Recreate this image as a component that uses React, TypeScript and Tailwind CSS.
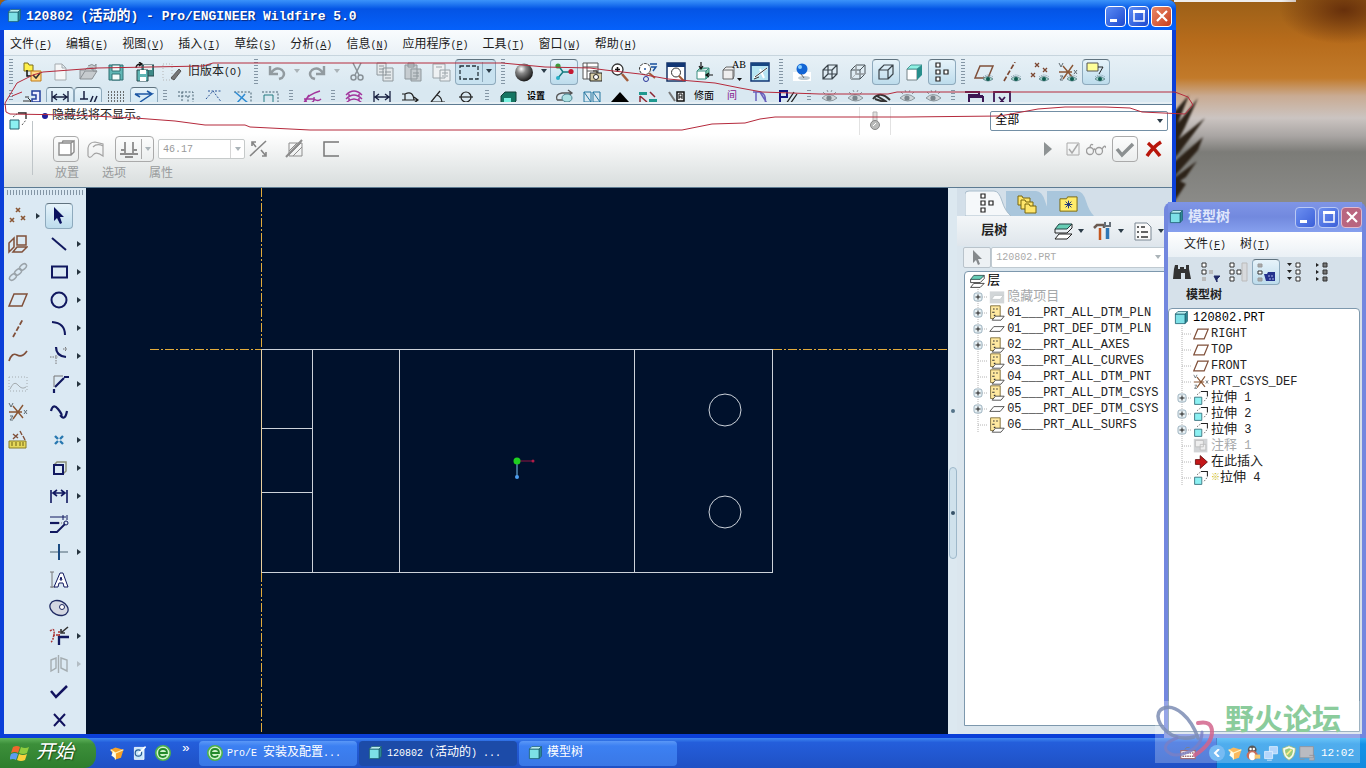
import React, { ReactNode } from "react";

const CJK = "font-['Liberation_Mono','Noto_Sans_CJK_SC',monospace]";

/* Latin runs are set smaller so that two Latin letters span one ideograph. */
function Mixed({ text, small = false }: { text: string; small?: boolean }) {
  const parts = text.split(/([\x20-\x7e]+)/).filter(Boolean);
  return (
    <span className="whitespace-pre">
      {parts.map((p, i) =>
        /^[\x20-\x7e]+$/.test(p) ? (
          <span key={i} className={small ? "text-[10px]" : "text-[12px]"}>{p}</span>
        ) : (
          <span key={i}>{p}</span>
        )
      )}
    </span>
  );
}

const eye = (
  <g>
    <path d="M9 17q4-5 10 0q-5 4-10 0z" fill="#9fd0c8" stroke="#5b7f86" strokeWidth=".8" />
    <circle cx="14" cy="17" r="2" fill="#0f5a50" />
    <path d="M9 15q5-4 10 0" stroke="#6a8896" strokeWidth=".8" strokeDasharray="1 1" />
  </g>
);
const grayEye = (
  <g>
    <path d="M3 11q7-7 15 0q-7 6-15 0z" fill="#cfd6da" stroke="#8c979d" />
    <circle cx="10" cy="11" r="2.6" fill="#7a858b" />
    <path d="M4 5l2 2M8 3l1 2M13 3l-1 2M17 5l-2 2" stroke="#8c979d" />
  </g>
);
const cubeBlue = (
  <g>
    <path d="M15 5l3-3v12l-3 3z" fill="#2f8f98" stroke="#1d5f70" />
    <path d="M3 5h12v12H3z" fill="#7de0e6" stroke="#1d5f70" />
    <path d="M3 5l3-3h12l-3 3z" fill="#c8fafa" stroke="#1d5f70" />
  </g>
);
const extrude = (
  <g>
    <path d="M2 9h9v9H2z" fill="#8cf0f2" stroke="#27616e" />
    <path d="M5 6l5-4M14 14l4-5" stroke="#555" strokeDasharray="2 1.5" />
    <path d="M10 2h8v6" stroke="#222" strokeWidth="1.3" />
  </g>
);
const layerPage = (
  <g>
    <path d="M2 1h12v16H2z" fill="#ffe9a0" stroke="#6d5a22" />
    <path d="M5 5h2M4 9h3M6 13h2M9 5h2" stroke="#333" strokeWidth="1.4" />
    <path d="M4 19l4-5h11l-4 5z" fill="#fff" stroke="#333" />
  </g>
);
const plane = <path d="M1 16L6 4h13l-5 12z" stroke="#80503a" strokeWidth="1.5" />;
const csys = (
  <g stroke="#8a5634" strokeWidth="1.4">
    <path d="M5 4l10 12M15 3L5 17M1 10h13" />
    <path d="M1 1l2 4 2-4M2 14h3l-3 4h3M16 8l3 4M19 8l-3 4" stroke="#5f6a70" strokeWidth="1" />
  </g>
);
const box = <path d="M3 8h9v9H3zM3 8l5-5h9v9l-5 5M12 8l5-5M8 3v9h9M8 12l-5 5" />;
const layers = (
  <g>
    <path d="M2 18l4-5h13l-5 5z" fill="#fff" stroke="#222" />
    <path d="M2 8l4-5h13l-5 5z" fill="#66cdb5" stroke="#244" />
    <path d="M2 8v4h12l5-5V3" stroke="#222" />
  </g>
);

const icons: Record<string, ReactNode> = {
  openCheck: (
    <g>
      <path d="M2 1h4l1 2h4v6H2z" fill="#fff04a" stroke="#7a6c1c" />
      <path d="M5 11v3h4M5 8v5" stroke="#111" strokeWidth="1.5" />
      <path d="M9 9h10v10H9z" fill="#ffd989" stroke="#c27a13" />
      <path d="M11 13l3 3 4-5" stroke="#333" strokeWidth="1.6" />
    </g>
  ),
  page: <path d="M5 2h7l4 4v12H5zM12 2v4h4" fill="#f5f7f8" stroke="#a5abaf" />,
  folder: <path d="M2 17V8h5l2-2h6v3h4l-5 8zM2 17l5-8h12M10 4q4-3 7 0l1-2v5h-5" fill="#c6cbce" stroke="#8a9094" />,
  save: (
    <g>
      <path d="M3 3h14v15H3z" fill="#5fb6b5" stroke="#2e6f73" />
      <path d="M6 3h8v6H6zM6 12h8v6H6z" fill="#f4fbfb" stroke="#2e6f73" />
    </g>
  ),
  saveCopy: (
    <g>
      <path d="M8 3h12v11H8z" fill="#3e8a88" stroke="#29484c" />
      <path d="M10 3h8v5h-8z" fill="#e6eff0" />
      <path d="M3 8h11v11H3z" fill="#5fb6b5" stroke="#29484c" />
      <path d="M6 8h6v4H6zM6 15h6v4H6z" fill="#fff" />
      <path d="M2 6q0-4 5-4M5 0l3 2-3 2" stroke="#111" strokeWidth="1.3" />
    </g>
  ),
  brush: (
    <g>
      <path d="M1 2h9v16H1z" stroke="#b5b5b5" strokeDasharray="1 2" />
      <path d="M9 16L17 7l2 2-7 9z" fill="#777" stroke="#555" />
    </g>
  ),
  undo: <path d="M3 4v8h8M4 11q5-7 11-3q4 4 0 8l-3 1" stroke="#929ba0" strokeWidth="2.4" />,
  redo: <path d="M17 4v8H9M16 11q-5-7-11-3q-4 4 0 8l3 1" stroke="#929ba0" strokeWidth="2.4" />,
  cut: (
    <g stroke="#899298" strokeWidth="1.5">
      <path d="M6 1l6 12M14 1L8 13" /><circle cx="6.500" cy="15.500" r="2.500" /><circle cx="13.500" cy="15.500" r="2.500" />
    </g>
  ),
  copy: <path d="M2 1h9v12H2zM4 4h5M4 7h5M4 10h5M8 6h10v13H8zM10 10h6M10 13h6M10 16h6" fill="#e4e9eb" stroke="#8e979c" />,
  paste: <path d="M2 3h12v14H2zM5 1h6v4H5zM8 7h10v12H8zM10 11h6M10 14h6" fill="#c6ccd0" stroke="#8e979c" />,
  pasteSpecial: <path d="M2 2h12v14H2zM5 5h6M9 8h10v11H9zM11 11h6M11 14h2m2 0h2" fill="#eef1f3" stroke="#9aa3a8" />,
  dashed: <path d="M1 4h18v13H1z" stroke="#25343c" strokeWidth="1.3" strokeDasharray="4 2" />,
  sphere: (
    <g>
      <defs>
        <radialGradient id="ball" cx=".35" cy=".3" r=".75">
          <stop offset="0" stopColor="#fff" /><stop offset=".35" stopColor="#888" /><stop offset="1" stopColor="#111" />
        </radialGradient>
      </defs>
      <circle cx="10" cy="10.500" r="9" fill="url(#ball)" />
    </g>
  ),
  spin: (
    <g>
      <path d="M4 3l5 7-5 6M9 10h8" stroke="#167c80" strokeWidth="1.5" />
      <circle cx="4" cy="4" r="2.600" fill="#3c9b3c" /><circle cx="17" cy="9.500" r="2.600" fill="#c51a32" /><circle cx="4" cy="16" r="2" fill="#29b0c8" />
    </g>
  ),
  camera: (
    <g>
      <path d="M1 1h15v16H1zM1 5h15M5 1v16M5 9h11" fill="#fff" stroke="#555" />
      <path d="M8 11h12v8H8zM11 9h4v2" fill="#d7cda4" stroke="#222" /><circle cx="14" cy="15" r="2.500" fill="#fff" stroke="#222" />
    </g>
  ),
  zoom: (
    <g>
      <path d="M12 12l6 7" stroke="#a15c3a" strokeWidth="2.500" /><circle cx="7.500" cy="7.500" r="5.500" fill="#fff" stroke="#333" strokeWidth="1.300" />
      <path d="M5 7.500h5M7.500 5v5" stroke="#111" strokeWidth="1.600" />
    </g>
  ),
  refit: (
    <g>
      <circle cx="7" cy="7" r="5.500" fill="#fff" stroke="#333" strokeDasharray="3 1" /><path d="M7 6v2M12 2h7M13 5h5l-3 4" stroke="#194f9c" strokeWidth="1.400" />
      <path d="M11 11l6 5" stroke="#a15c3a" strokeWidth="2" /><circle cx="8" cy="17" r="2.500" stroke="#283399" />
    </g>
  ),
  zoomWin: (
    <g>
      <path d="M1 1h18v18H1z" fill="#fff" stroke="#163365" strokeWidth="1.500" /><path d="M1 1h18v4H1z" fill="#123775" />
      <circle cx="10" cy="10.500" r="4.500" stroke="#333" fill="#fff" /><path d="M13 14l5 5" stroke="#a05c36" strokeWidth="2" />
    </g>
  ),
  orient: (
    <g>
      <path d="M3 9h9v8H3z" fill="#fff" stroke="#3b8e80" /><path d="M3 9l3-3h9l-3 3v8l3-3V6" fill="#7cc8ac" stroke="#3b8e80" />
      <path d="M7 0v6M5 4l2 3 2-3M19 13h-6M15 11l-3 2 3 2" stroke="#111" strokeWidth="1.200" />
    </g>
  ),
  saved: (
    <g>
      <path d="M1 8h10v9H1zM1 8l3-3h8v9l-1 3" fill="#eee" stroke="#666" />
      <path d="M15 16h5l-2.500 3z" fill="#111" />
    </g>
  ),
  sketchView: (
    <g>
      <path d="M1 1h18v18H1z" fill="#b7e5f3" stroke="#123775" strokeWidth="1.500" /><path d="M1 1h18v3H1z" fill="#164581" />
      <path d="M4 16L17 6M10 7l4 9" stroke="#fff" strokeWidth="2" /><path d="M5 15L17 6M4 17l5-2" stroke="#333" />
    </g>
  ),
  blueBall: (
    <g>
      <path d="M1 10h18v9H1z" fill="#fff" /><ellipse cx="12" cy="16" rx="6" ry="2" fill="#bbc9d2" />
      <circle cx="10" cy="7" r="5.500" fill="#1265d5" /><circle cx="8" cy="5" r="2" fill="#8ad0ff" /><path d="M9 12l3 4" stroke="#666" />
    </g>
  ),
  wire: <g stroke="#39434a" strokeWidth="1.200">{box}</g>,
  hidden: <g stroke="#4b555b" strokeWidth="1">{box}<path d="M8 3v9h9M8 12l-5 5" stroke="#b0b5b8" /></g>,
  noHidden: <path d="M3 8h9v9H3zM3 8l5-5h9v9l-5 5M12 8l5-5" stroke="#39434a" strokeWidth="1.200" />,
  shaded: (
    <g><path d="M3 7h10v11H3z" fill="#fff" stroke="#748286" /><path d="M3 7l4-4h11l-5 4z" fill="#8df1e2" stroke="#4d9998" /><path d="M13 7l5-4v10l-5 5z" fill="#278e8b" /></g>
  ),
  tree: <path d="M4 1h4v4H4zM4 8h4v4H4zM4 15h4v4H4zM12 8h4v4h-4z" fill="#fff" stroke="#222" strokeWidth="1.200" />,
  plane: <g>{plane}</g>,
  planeEye: <g>{plane}{eye}</g>,
  axisEye: <g><path d="M2 19L13 0" stroke="#7b4630" strokeWidth="1.700" strokeDasharray="5 2" />{eye}</g>,
  pointEye: <g><path d="M5 1l4 4M9 1L5 5M1 11l4 4M5 11l-4 4M13 6l4 4M17 6l-4 4" stroke="#7b4630" strokeWidth="1.300" />{eye}</g>,
  csysEye: <g>{csys}{eye}</g>,
  noteEye: <g><path d="M1 1h11v8H1z" fill="#ffff99" stroke="#555" /><path d="M12 5h5l-4 7" stroke="#222" />{eye}</g>,
  sketchOpen: <g><path d="M10 4h8v11h-8v-3h4V8h-4z" fill="#eef" stroke="#223f9c" strokeWidth="1.500" /><path d="M1 14h8M6 11l3 3-3 3M3 10h4" stroke="#333" /></g>,
  dim: <path d="M2 4v12M18 4v12M3 10h14M7 7l-4 3 4 3M13 7l4 3-4 3" stroke="#182040" strokeWidth="1.300" />,
  constr: <path d="M6 4v8M2 12h8M12 16l3-7M16 16l3-7" stroke="#182040" strokeWidth="1.500" />,
  dots: <path d="M2 5h17M2 8h17M2 11h17M2 14h17M2 17h17" stroke="#444" strokeWidth="1.300" strokeDasharray="1 2" />,
  vertex: <path d="M1 7h17l-12 8M1 7l5 3M13 4l5 3" stroke="#1c57a4" strokeWidth="1.500" />,
  dashA: <path d="M2 5h15v12M2 9h12M6 5v12M12 9v8" stroke="#476170" strokeDasharray="2 1.500" />,
  dashB: <path d="M2 12l7-8 9 12H3M4 4h14" stroke="#2a5498" strokeDasharray="2 1.500" />,
  dashC: <g><path d="M2 5h17v12" stroke="#476170" strokeDasharray="2 1.500" /><path d="M3 5l13 11M5 16l8-9" stroke="#2e8bd2" strokeWidth="1.500" /></g>,
  dashD: <g><path d="M2 5h16v12" stroke="#476170" strokeDasharray="2 1.500" /><path d="M4 8h9v9H4z" stroke="#227b80" /></g>,
  curve: <path d="M2 16q2-8 16-12M2 12h10q4 3 7 0M7 8q-6 8 0 8t5-6" stroke="#a2359c" strokeWidth="1.400" />,
  rings: <path d="M2 8q8-8 16 0M2 12q8-8 16 0M2 16q8-8 16 0M5 7v10M15 7v10" stroke="#a2359c" strokeWidth="1.400" />,
  arcM: <path d="M2 7h3q8-4 9 6M2 13h16M5 7v6M14 10l4 3-4 3" stroke="#222" strokeWidth="1.200" />,
  angle: <path d="M3 15L12 4M3 15h14M9 8q5 2 5 8" stroke="#222" strokeWidth="1.200" />,
  diam: <g stroke="#222" strokeWidth="1.200"><circle cx="10" cy="10" r="5" /><path d="M3 10h14" /></g>,
  solid: <g><path d="M3 9l4-4h11v9l-4 4H3z" fill="#157562" stroke="#133d35" /><path d="M6 11h7v7H6z" fill="#7af0e0" /></g>,
  orbit: <g><path d="M3 13q-2-6 5-7h9M14 3l4 3-4 3M3 13h6" stroke="#555" strokeWidth="1.300" /><ellipse cx="13" cy="11" rx="5" ry="4" fill="#aee1e3" stroke="#4c8490" /></g>,
  nn: <path d="M2 5h7v10H2zM11 5h7v10h-7zM2 5l7 10M11 5l7 10" stroke="#2476a0" />,
  tri: <path d="M1 15L10 5l9 10z" fill="#000" />,
  swap: <g><path d="M1 5h8v3H1zM11 12h8v4h-8z" fill="#1e988f" /><path d="M2 9v7M2 9l7 6M12 5l5 5" stroke="#8e2633" strokeWidth="1.500" /></g>,
  flagA: <g><path d="M3 5l6 9" stroke="#777" strokeWidth="2" /><path d="M11 5h7v9h-7z" fill="#eee" stroke="#111" strokeWidth="1.500" /><path d="M13 12V7h3v5M13 10h3" stroke="#111" /></g>,
  mirrorP: <path d="M3 5h7l8 13M6 5v9M10 5q7 2 5 12" stroke="#6a60bd" strokeWidth="1.500" />,
  pHatch: <g><path d="M2 17V4h7v6H2" stroke="#12127e" strokeWidth="2" /><path d="M8 17l8-12M12 17l7-10M13 16h7" stroke="#222" strokeWidth="1.300" /></g>,
  grayEye,
  darkEye: <path d="M2 12q7-9 17 1M6 9l10 6M4 12l12 4" stroke="#333" strokeWidth="2" />,
  winA: <path d="M1 5h14v3H5v9M5 10h14v7M5 9h14" stroke="#3b1552" strokeWidth="2" />,
  winX: <path d="M2 17V5h16v12M7 10l6 7M13 10l-6 7" stroke="#3b1552" strokeWidth="1.800" />,
  points: <path d="M8 2l4 4M12 2L8 6M2 12l4 4M6 12l-4 4M13 10l4 4M17 10l-4 4" stroke="#8a5634" strokeWidth="1.600" />,
  datumSet: <path d="M9 2h9v9H9zM1 9l5-5v9l-5 5zM5 18l4-5h10l-5 5z" stroke="#80503a" strokeWidth="1.500" />,
  chain: <g stroke="#9ba4aa" strokeWidth="1.500"><ellipse cx="5" cy="15" rx="4" ry="2.500" transform="rotate(-40 5 15)" /><ellipse cx="10" cy="10" rx="4" ry="2.500" transform="rotate(-40 10 10)" /><ellipse cx="15" cy="5" rx="4" ry="2.500" transform="rotate(-40 15 5)" /></g>,
  axis: <path d="M5 19L15 1" stroke="#80503a" strokeWidth="1.800" strokeDasharray="5 2" />,
  spline: <path d="M1 15Q4 6 9 9t10-4" stroke="#80503a" strokeWidth="1.700" />,
  splineG: <g stroke="#a4abaf"><path d="M1 3h18v14H1z" strokeDasharray="1 2" /><path d="M2 15q4-9 8-4t8 2" /></g>,
  csys,
  analysis: <g><path d="M5 4l5 4M10 4L5 9M12 1l2 4M15 6l2 4" stroke="#80503a" strokeWidth="1.400" /><path d="M1 11h17v7H1z" fill="#e5d85a" stroke="#897c22" /><path d="M4 12v4M8 12v4M12 12v4M15 12v4" stroke="#6e6114" /></g>,
  arrow: <path d="M5 1v14l3-3 3 6 2-1-2-6h4z" fill="#09115e" />,
  line: <path d="M3 4l14 12" stroke="#11185f" strokeWidth="2" />,
  rect: <path d="M3 4.500h15v11H3z" stroke="#11185f" strokeWidth="2" />,
  circle: <circle cx="10" cy="10" r="7.500" stroke="#11185f" strokeWidth="2" />,
  arc: <path d="M3 4q13 1 13 13" stroke="#11185f" strokeWidth="2" />,
  fillet: <g><path d="M7 1q0 9 10 10" stroke="#11185f" strokeWidth="2.200" /><path d="M1 11h8M7 9v9M14 3h5M16.500 1v5" stroke="#777" strokeDasharray="1.500 1" /></g>,
  chamfer: <g><path d="M5 19v-4M6 13l9-9M15 3h5" stroke="#11185f" strokeWidth="2.200" /><path d="M5 13V2h9" stroke="#777" /></g>,
  wave: <path d="M2 9q2-8 7-2t3 7q4 5 6-5" stroke="#11185f" strokeWidth="2.200" />,
  pt: <path d="M6 6l3 3M14 6l-3 3M6 14l3-3M14 14l-3-3" stroke="#2878b0" strokeWidth="2.400" />,
  edge: <g><path d="M5 7l3-3h9v9l-3 3" stroke="#8b8f78" strokeWidth="1.500" /><path d="M5 7h9v9H5z" stroke="#11185f" strokeWidth="2" /></g>,
  dimB: <path d="M2 4v13M18 4v13M4 7h12M8 4L4 7l4 3M12 4l4 3-4 3" stroke="#11185f" strokeWidth="1.600" />,
  modify: <g><path d="M1 3h16M14 1v5M18 1v5" stroke="#11185f" /><path d="M1 9h9" stroke="#11185f" strokeWidth="2.200" /><path d="M10 9h6" stroke="#777" strokeDasharray="1 1" /><path d="M1 18h7l8-8" stroke="#11185f" strokeWidth="1.800" /><circle cx="17" cy="9" r="2" stroke="#11185f" /></g>,
  cross: <g><path d="M1 10h18" stroke="#7a8e9d" strokeWidth="1.500" /><path d="M10 2v16" stroke="#1b4b82" strokeWidth="2" /></g>,
  textA: <g><path d="M3 2v16M1 2h4M1 17h5" stroke="#777" /><path d="M5 17L11 3h3l5 14h-4l-1-4h-4l-1 4zM11 10h2l-1-3z" fill="#fff" stroke="#11185f" /></g>,
  palette: <g><ellipse cx="10" cy="10" rx="9.500" ry="7" transform="rotate(25 10 10)" fill="#d4d8e2" stroke="#1f2a62" strokeWidth="1.300" /><circle cx="13" cy="9" r="2.500" fill="#fff" stroke="#1f2a62" /></g>,
  trim: <g><path d="M10 19v-8h10" stroke="#11185f" strokeWidth="2.300" /><path d="M1 5q5-4 4 3t-3 8M4 9h7M10 5v5" stroke="#a33" strokeWidth="1.500" strokeDasharray="2 1" /><path d="M19 1l-6 5M12 3v4h4" stroke="#333" strokeWidth="1.600" /></g>,
  mirror: <path d="M2 6l5-2v10l-5 3zM12 4l6 2v11l-6-3zM9.500 1v18" stroke="#a5adb1" strokeWidth="1.400" />,
  check: <path d="M2 9l5 6L18 4" stroke="#11125e" strokeWidth="2.500" />,
  cancel: <path d="M5 4l11 12M16 4L5 16" stroke="#11125e" strokeWidth="2" />,
  cube: cubeBlue,
  extrude,
  layerPage,
  layers,
  layerFlat: <path d="M1 13l5-6h13l-5 6z" fill="#fff" stroke="#333" />,
  layerGray: <g><path d="M1 3h18v15H1z" fill="#d2d6d8" /><path d="M3 13l4-5h11l-4 5z" fill="#fff" stroke="#c2c6c8" /></g>,
  noteGray: <g><path d="M1 1h17v17H1z" fill="#d2d4d6" /><path d="M3 3h10v8H3zM9 8h7v7H9z" fill="#eee" stroke="#bbb" /></g>,
  insert: <path d="M3 7h6V2l9 8-9 8v-5H3z" fill="#c41719" stroke="#5d0808" />,
  folders: <g fill="#ffe66b" stroke="#79670f"><path d="M1 2h4l1 2h7v7H1z" /><path d="M4 6h4l1 2h7v7H4z" /><path d="M8 10h4l1 2h6v7H8z" /></g>,
  favorite: <g><path d="M1 4h7l1-2h10v15H1z" fill="#ffec6b" stroke="#79670f" /><path d="M10 6v8M6 10h8M7 7l6 6M13 7l-6 6" stroke="#16307d" /></g>,
  tools: <g><path d="M1 7l3-3h7v3" stroke="#6b5b52" strokeWidth="2.500" /><path d="M7 7v12" stroke="#c4571f" strokeWidth="2.500" /><path d="M12 1v4h5V1" stroke="#666f77" strokeWidth="2" /><path d="M14.500 7v11" stroke="#2f77b5" strokeWidth="3.500" /></g>,
  listPage: <g><path d="M2 2h12l4 4v13H2z" fill="#fafafa" stroke="#7a8793" /><path d="M4 6h2M4 11h2M4 16h2M8 6h4M8 11h7M8 16h7" stroke="#333" strokeWidth="1.500" /></g>,
  binoc: <path d="M3 3h3v4h2V5h4v2h2V3h3v4l2 10h-6v-6H9v6H1l1-10z" fill="#333" />,
  treeFilter: <g><path d="M2 1h4v4H2zM2 8h4v4H2z" fill="#fff" stroke="#333" /><path d="M2 15h4v4H2zM9 8h4v4H9z" fill="#bbb" /><path d="M14 14h6l-3 3v3z" fill="#222a66" stroke="#222a66" /></g>,
  treeCols: <g><path d="M2 1h4v4H2zM2 8h4v4H2zM2 15h4v4H2zM9 8h4v4H9z" fill="#fff" stroke="#333" /><path d="M14 1h5v18h-5z" fill="#d8dadd" stroke="#bbb" /></g>,
  treeSel: <g><path d="M2 2h4v3H2zM2 16h4v3H2z" fill="#aaa" stroke="#999" /><path d="M2 9h4v3H2z" fill="#fff" stroke="#333" /><path d="M8 12h3l1-2h7v9H10z" fill="#24328d" /><path d="M12 14h6M13 17h5" stroke="#aab4e8" strokeDasharray="2 1" /></g>,
  expand: <g><path d="M3 1h5L5.500 4zM3 8h5l-2.500 3zM3 15h5l-2.500 3z" fill="#222" /><path d="M12 1h4v4h-4zM12 8h4v4h-4zM12 15h4v4h-4z" fill="#fff" stroke="#333" /></g>,
  collapse: <g><path d="M4 1l3 2-3 2zM4 8l3 2-3 2zM4 15l3 2-3 2z" fill="#222" /><path d="M11 1h4v4h-4zM11 8h4v4h-4zM11 15h4v4h-4z" fill="#777" stroke="#333" /></g>,
  solidG: <path d="M3 4h12v12H3zM15 4l3-2v11l-3 3M6 4l1-2h11" fill="#fff" stroke="#8c8c8c" strokeWidth="1.400" />,
  surfG: <path d="M3 17V9q1-6 7-6l8 2v12q-7-5-10-1t-5 1M8 8q4-4 10-1" stroke="#a3a3a3" strokeWidth="1.200" />,
  depthG: <path d="M1 15h18M6 3v12M14 3v12M2 11h4M14 11h4M6 18h8" stroke="#8c8c8c" strokeWidth="1.800" />,
  flipG: <path d="M1 17L17 2M3 3l4 5M12 11l5 6M3 7V3h4M17 13v4h-4" stroke="#858585" strokeWidth="1.600" />,
  hatchG: <g stroke="#8d8d8d"><path d="M4 4h13v13H4zM4 12l8-8M4 16L16 4M8 17l9-9" /><path d="M1 18L17 1" strokeWidth="2" /></g>,
  thinG: <path d="M18 3H3v14h15" stroke="#777" strokeWidth="1.500" />,
  playG: <path d="M6 3l8 7-8 7z" fill="#8e9394" />,
  previewG: <g stroke="#aaa"><path d="M3 4h12v12H3z" /><path d="M5 10l3 4 6-9" strokeWidth="1.500" /></g>,
  glassesG: <g stroke="#9d9d9d" strokeWidth="1.300"><circle cx="4" cy="12" r="3.500" /><circle cx="13" cy="12" r="3.500" /><path d="M7.500 11q1-2 2 0M4 8q1-4 3-2M16 10q3-5 4-1" /></g>,
  okG: <path d="M2 10l5 6L18 5" stroke="#8b9091" strokeWidth="3.500" />,
  redX: <path d="M4 4q6 5 12 13M17 3Q9 8 3 17" stroke="#b8160b" strokeWidth="3.500" />,
  thermo: <g><path d="M8 1h4v11H8z" fill="#e0e0de" stroke="#b1b1b1" /><circle cx="10" cy="14" r="4.500" fill="#b9bab9" stroke="#878787" /><path d="M8 15l3-3" stroke="#fff" /></g>,
  quick: <g><path d="M2 6l6-3 10 3-3 10-7 2z" fill="#f8a228" /><path d="M2 6l6 4 10-4M8 10v8" stroke="#fff0b4" strokeWidth="1.500" /><path d="M5 8l3 2v7L3 13z" fill="#fffbe6" /></g>,
  desktopIco: <g><path d="M3 3h12v15H3z" fill="#c7e7fb" stroke="#fff" /><circle cx="8" cy="10" r="4" stroke="#2a5c93" strokeWidth="1.500" /><path d="M8 11l9-9" stroke="#fff" strokeWidth="2" /></g>,
  browser: <g><circle cx="10" cy="10" r="9" fill="#d2f4cc" stroke="#4db14a" strokeWidth="2" /><path d="M5 10h10q0-5-5-5t-5 5 5 5q3 0 4-2" stroke="#238929" strokeWidth="2.200" /></g>,
  windows: <g><path d="M3 4q4-2 7 0L8 10q-3-2-7 0z" fill="#f0682c" /><path d="M11 4q4 2 8 0l-2 6q-4 2-8 0z" fill="#8fcd3f" /><path d="M1 11q4-2 7 0l-2 6q-3-2-7 0z" fill="#5c9cf0" /><path d="M9 11q4 2 8 0l-2 6q-4 2-8 0z" fill="#f9d13c" /></g>,
  qq: <g><circle cx="9" cy="6" r="5.500" fill="#222" /><ellipse cx="9" cy="13" rx="7" ry="6" fill="#b53c25" /><ellipse cx="9" cy="14" rx="4" ry="5" fill="#fff" /><circle cx="7" cy="5" r="1.500" fill="#fff" /><circle cx="11" cy="5" r="1.500" fill="#fff" /><path d="M12 12h7v5h-7z" fill="#f0b441" /></g>,
  network: <g fill="#9bc8fa" stroke="#d8ebff"><path d="M8 2h10v9H8z" /><path d="M2 8h10v9H2z" /><path d="M5 19h6" /></g>,
  shield: <g><path d="M10 1l8 3q0 11-8 15Q2 15 2 4z" fill="#f6fae4" stroke="#76a14c" /><path d="M10 4l5 2q0 7-5 10-5-3-5-10z" fill="#7db94c" /><path d="M7 12l6-6" stroke="#ffeb68" strokeWidth="2" /></g>,
  monitor: <path d="M1 2h17v14H1zM1 18h6M13 13h6v6h-6" fill="#a3a4ac" stroke="#6b6d77" />,
  keyboard: <g><path d="M1 7h18v10H1z" fill="#fff" stroke="#7e3b4b" strokeWidth="1.500" /><path d="M3 10h14M3 14h14" stroke="#7c3c49" strokeWidth="2" strokeDasharray="2 1" /><path d="M6 6q1-4 6-3" stroke="#555" /></g>,
};

function Icon({ name, big = true }: { name: string; big?: boolean }) {
  return (
    <svg viewBox="0 0 20 20" fill="none" aria-hidden="true" className={big ? "h-5 w-5 shrink-0" : "h-4 w-4 shrink-0"}>
      {icons[name]}
    </svg>
  );
}

const Caret = ({ faint = false }: { faint?: boolean }) => (
  <svg viewBox="0 0 8 5" className={faint ? "h-[5px] w-2 shrink-0 fill-[#aab3b8]" : "h-[5px] w-2 shrink-0 fill-[#2c3c48]"}><path d="M1 0h6L4 4z" /></svg>
);

function Drop({ faint = false }: { faint?: boolean }) {
  return <button aria-label="更多" className="flex h-7 w-3 items-center justify-center"><Caret faint={faint} /></button>;
}

function Tool({ name, on = false, narrow = false }: { name: string; on?: boolean; narrow?: boolean }) {
  return (
    <button
      aria-label={name}
      className={`relative flex h-[26px] shrink-0 items-center justify-center ${narrow ? "w-[26px]" : "w-7"} ${
        on ? "rounded-sm border border-[#8eaabd] border-t-[#60737f] bg-gradient-to-b from-[#e6f3fa] to-[#bddcec]" : ""
      }`}
    >
      <Icon name={name} />
      {name === "saved" && <span className="absolute right-0 top-0 font-['Liberation_Serif',serif] text-[10px] leading-3">AB</span>}
    </button>
  );
}
const Tools = ({ names, on = [], narrow }: { names: string[]; on?: string[]; narrow?: boolean }) => (
  <>{names.map((n, i) => <Tool key={n + i} name={n} on={on.includes(n)} narrow={narrow} />)}</>
);

/* Tools of the half-hidden second row keep a lower frame height. */
const LowTools = ({ names, on = [], narrow }: { names: string[]; on?: string[]; narrow?: boolean }) => (
  <>
    {names.map((n, i) => (
      <button
        key={n + i}
        aria-label={n}
        className={`flex h-5 shrink-0 items-center justify-center ${narrow ? "w-[26px]" : "w-7"} ${
          on.includes(n) ? "rounded-sm border border-[#8eaabd] border-t-[#60737f] bg-gradient-to-b from-[#e6f3fa] to-[#cfe6f2]" : ""
        }`}
      >
        <Icon name={n} />
      </button>
    ))}
  </>
);
const Grip = () => (
  <span className="flex w-[14px] shrink-0 justify-center self-stretch">
    <span className="my-0.5 w-1 bg-[radial-gradient(circle,#8496a5_0.8px,transparent_1px)] bg-[size:2px_3px]" />
  </span>
);

const menus: [string, string][] = [
  ["文件", "F"], ["编辑", "E"], ["视图", "V"], ["插入", "I"], ["草绘", "S"], ["分析", "A"],
  ["信息", "N"], ["应用程序", "P"], ["工具", "T"], ["窗口", "W"], ["帮助", "H"],
];
const MenuItem = ({ label, k }: { label: string; k: string }) => (
  <button className="whitespace-nowrap text-[12px] leading-4 text-[#1b1b1b]">
    {label}<span className="text-[10px]">(<u>{k}</u>)</span>
  </button>
);

function WinButtons({ pale = false }: { pale?: boolean }) {
  const base = "flex h-[21px] w-[21px] items-center justify-center rounded border ";
  const blue = pale
    ? "border-[#b9c8f4] bg-gradient-to-br from-[#6d8ff0] to-[#3c5fd8]"
    : "border-white bg-gradient-to-br from-[#5d8cf5] to-[#1d47cf]";
  const red = pale ? "border-[#e0b9cd] bg-[#b9657f]" : "border-white bg-gradient-to-br from-[#e98765] to-[#c73d1c]";
  return (
    <div className="flex gap-0.5">
      <button aria-label="最小化" className={base + blue}><svg viewBox="0 0 14 14" className="h-3.5 w-3.5"><path d="M1 10h7v3H1z" fill="#fff" /></svg></button>
      <button aria-label="最大化" className={base + blue}><svg viewBox="0 0 14 14" className="h-3.5 w-3.5"><path d="M2 3h10v9H2z" fill="none" stroke="#fff" strokeWidth="1.500" /><path d="M1 1h12v3H1z" fill="#fff" /></svg></button>
      <button aria-label="关闭" className={base + red}><svg viewBox="0 0 14 14" className="h-3.5 w-3.5"><path d="M2 2l10 10M12 2L2 12" stroke="#fff" strokeWidth="2.200" /></svg></button>
    </div>
  );
}

function Dashboard() {
  return (
    <section className="flex h-[84px] shrink-0 border-y border-[#5d7b92] bg-gradient-to-b from-white from-35% to-[#d8dddd]">
      <div className="flex w-7 justify-center pt-1.5"><Icon name="extrude" /></div>
      <div className="mb-3 mt-4 w-px bg-[#bfc5c8]" />
      <div className="flex min-w-0 flex-1 flex-col">
        <div className="flex h-[31px] items-start pl-[9px]">
          <p className="flex items-center gap-1 pt-[3px] text-[12px] leading-4 text-[#222]">
            <span className="h-1.5 w-1.5 rounded-full bg-[#1f1f9c]" />隐藏线将不显示。
          </p>
          <div className="ml-auto mt-0.5 flex h-7 w-8 items-center justify-center border-x border-[#e2e2e2]"><Icon name="thermo" /></div>
          <label className="relative ml-[99px] mr-1 mt-1.5 flex w-[178px] items-center">
            <select aria-label="过滤器" className="h-5 w-full appearance-none rounded-xs border border-[#738fa5] bg-white pl-1 text-[12px] text-black">
              <option>全部</option>
            </select>
            <span className="pointer-events-none absolute right-1"><Caret /></span>
          </label>
        </div>
        <div className="flex h-[26px] items-center pl-5">
          <button aria-label="实体" className="flex h-[26px] w-[26px] items-center justify-center rounded-sm border border-[#aaa]"><Icon name="solidG" /></button>
          <button aria-label="曲面" className="flex w-8 justify-center"><Icon name="surfG" /></button>
          <div className="ml-1 flex h-[26px] items-center rounded-sm border border-[#aaa]">
            <button aria-label="深度" className="flex w-[26px] justify-center border-r border-[#aaa]"><Icon name="depthG" /></button>
            <button aria-label="深度选项" className="flex w-[11px] justify-center"><Caret faint /></button>
          </div>
          <div className="ml-1 flex h-5 w-[87px] items-center rounded-xs border border-[#c6caca] bg-white">
            <input aria-label="深度值" defaultValue="46.17" className="h-full min-w-0 flex-1 bg-transparent pl-1 text-[10px] text-[#999] outline-none" />
            <button aria-label="最近值" className="flex h-full w-[14px] items-center justify-center border-l border-[#d5d5d5]"><Caret faint /></button>
          </div>
          <div className="flex items-center gap-4 pl-1"><Icon name="flipG" /><Icon name="hatchG" /><Icon name="thinG" /></div>
          <div className="ml-auto flex items-center pr-2">
            <Icon name="playG" /><span className="w-[6px]" /><Icon name="previewG" /><span className="w-0.5" /><Icon name="glassesG" />
            <button aria-label="确定" className="mx-1.5 flex h-[26px] w-[26px] items-center justify-center rounded-sm border border-[#aaa]"><Icon name="okG" /></button>
            <button aria-label="取消"><Icon name="redX" /></button>
          </div>
        </div>
        <div className="flex h-6 items-center gap-[23px] pl-[22px] text-[12px] text-[#989b9c]">
          <button>放置</button><button>选项</button><button>属性</button>
        </div>
      </div>
    </section>
  );
}

const datumTools = ["points", "datumSet", "chain", "plane", "axis", "spline", "splineG", "csys", "analysis"];
const sketchTools: [string, number][] = [
  ["arrow", 0], ["line", 1], ["rect", 1], ["circle", 1], ["arc", 1], ["fillet", 1], ["chamfer", 1], ["wave", 0], ["pt", 1],
  ["edge", 1], ["dimB", 1], ["modify", 0], ["cross", 1], ["textA", 0], ["palette", 0], ["trim", 1], ["mirror", 2], ["check", 0], ["cancel", 0],
];
const SideCaret = ({ show }: { show: number }) => (
  <span className="flex w-3 justify-center">
    {show > 0 && <svg viewBox="0 0 4 6" className={show === 2 ? "h-1.5 w-1 fill-[#b3bdc4]" : "h-1.5 w-1 fill-[#26343f]"}><path d="M0 0v6l4-3z" /></svg>}
  </span>
);

function SideBar() {
  return (
    <aside className="flex w-[82px] shrink-0 flex-col bg-[#dbe9f3]">
      <div className="mx-0.5 mt-0.5 h-[5px] shrink-0 bg-[radial-gradient(circle,#8496a5_0.8px,transparent_1px)] bg-[size:3px_2px]" />
      <div className="flex pt-[7px]">
        <div className="flex w-10 flex-col">
          {datumTools.map((n, i) => (
            <div key={n} className="flex h-7 items-center pl-1"><button aria-label={n}><Icon name={n} /></button><span className="w-1" /><SideCaret show={i === 0 ? 1 : 0} /></div>
          ))}
        </div>
        <div className="flex flex-col">
          {sketchTools.map(([n, c]) => (
            <div key={n} className="flex h-7 items-center pl-px"><Tool name={n} on={n === "arrow"} /><SideCaret show={c} /></div>
          ))}
        </div>
      </div>
    </aside>
  );
}

function Canvas() {
  return (
    <main className="relative min-w-0 flex-1 overflow-hidden bg-[#00112c]">
      <svg className="absolute inset-0 h-full w-full" fill="none" stroke="#ccd2da" shapeRendering="crispEdges">
        <path d="M175.500 161.500h511v223h-511zM226.500 161.500v223M313.500 161.500v223M548.500 161.500v223M175.500 240.500h51M175.500 304.500h51" />
        <path d="M175.500 0v161M175.500 385v600M64 161.500h111M687 161.500h1200" stroke="#e3ac3c" strokeDasharray="9 2 2 2" />
        <path d="M175.500 161v224" stroke="#e8cf9e" />
        <g shapeRendering="auto">
          <circle cx="639" cy="222" r="16" /><circle cx="639" cy="324" r="16" />
          <path d="M431 273h15" stroke="#8c1740" /><circle cx="447" cy="273" r="1.500" fill="#b01c48" stroke="none" />
          <path d="M431 273v15" stroke="#7ec8f4" /><circle cx="431" cy="289" r="2" fill="#4c9df0" stroke="none" />
          <circle cx="431" cy="273" r="3.500" fill="#1fd01f" stroke="none" />
        </g>
      </svg>
    </main>
  );
}

const Expander = ({ show }: { show: boolean }) => (
  <svg viewBox="0 0 18 16" className="h-4 w-[18px] shrink-0" fill="none">
    {show ? (
      <g><path d="M9 0v16M13 8h5" stroke="#b4b4b4" strokeDasharray="1 1" /><rect x="5" y="4" width="8" height="8" rx="2" fill="#e8f1f5" stroke="#9db2bf" /><path d="M6.500 8h5M9 5.500v5" stroke="#222" /></g>
    ) : (
      <path d="M9 0v16M9 8h9" stroke="#b4b4b4" strokeDasharray="1 1" />
    )}
  </svg>
);

const layerRows: [string, string, boolean][] = [
  ["隐藏项目", "layerGray", true], ["01___PRT_ALL_DTM_PLN", "layerPage", true], ["01___PRT_DEF_DTM_PLN", "layerFlat", true],
  ["02___PRT_ALL_AXES", "layerPage", true], ["03___PRT_ALL_CURVES", "layerPage", false], ["04___PRT_ALL_DTM_PNT", "layerPage", false],
  ["05___PRT_ALL_DTM_CSYS", "layerPage", true], ["05___PRT_DEF_DTM_CSYS", "layerFlat", true], ["06___PRT_ALL_SURFS", "layerPage", false],
];
const modelRows: [string, string, boolean][] = [
  ["RIGHT", "plane", false], ["TOP", "plane", false], ["FRONT", "plane", false], ["PRT_CSYS_DEF", "csys", false],
  ["拉伸 1", "extrude", true], ["拉伸 2", "extrude", true], ["拉伸 3", "extrude", true], ["注释 1", "noteGray", false],
  ["在此插入", "insert", false], ["拉伸 4", "extrude", false],
];

function TreeRow({ text, icon, open, muted, star }: { text: string; icon: string; open: boolean; muted?: boolean; star?: boolean }) {
  return (
    <li className={`flex h-4 items-center text-[13px] leading-4 ${muted ? "text-[#a5a8aa]" : "text-[#222]"}`}>
      <Expander show={open} /><span className="w-0.5" /><Icon name={icon} big={false} /><span className="w-0.5" />
      {star && <span className="text-[9px] text-[#c9b400]">※</span>}
      <Mixed text={text} />
    </li>
  );
}

function LayerPanel() {
  return (
    <section className="flex w-[215px] shrink-0 flex-col bg-[#dbe6ee]">
      <div className="flex h-7 shrink-0 items-end bg-[#d3dfe9] pl-2">
        <svg viewBox="0 0 130 26" className="h-[26px] w-[130px]">
          <path d="M82 26V1h30q6 0 9 10t8 15z" fill="#a9c6dc" /><path d="M41 26V1h30q6 0 9 10t8 15z" fill="#a9c6dc" />
          <path d="M0 26V4q0-3 4-3h25q5 0 8 10t9 15z" fill="#f5f8fa" stroke="#a8bccb" />
          <svg x="12" y="3" width="20" height="20" viewBox="0 0 20 20" fill="none">{icons.tree}</svg>
          <svg x="52" y="4" width="20" height="20" viewBox="0 0 20 20" fill="none">{icons.folders}</svg>
          <svg x="94" y="5" width="19" height="19" viewBox="0 0 20 20" fill="none">{icons.favorite}</svg>
        </svg>
      </div>
      <div className="flex h-[30px] shrink-0 items-center bg-gradient-to-b from-[#f3f6f8] to-[#dfe6ec] pl-6">
        <h2 className="w-[72px] text-[13px] font-bold text-[#222]">层树</h2>
        <div className="flex items-center gap-2">
          {["layers", "tools", "listPage"].map((n) => <button key={n} aria-label={n} className="flex items-center gap-1"><Icon name={n} /><Caret /></button>)}
        </div>
      </div>
      <div className="flex h-[22px] shrink-0 items-center pl-1.5">
        <button aria-label="选取" className="flex h-[21px] w-7 items-center justify-center rounded-xs border border-[#b9c3cb] bg-[#edf1f4]">
          <svg viewBox="0 0 20 20" className="h-5 w-5"><path d="M6 3v13l3-3 2 5 2-1-2-5h4z" fill="#85898c" /></svg>
        </button>
        <label className="relative flex h-[21px] min-w-0 flex-1 items-center">
          <input aria-label="活动模型" disabled defaultValue="120802.PRT" className="h-[21px] w-full rounded-xs border border-[#c0cad1] bg-white pl-1 text-[10px] text-[#aaa]" />
          <span className="absolute right-[10px]"><Caret faint /></span>
        </label>
      </div>
      <div className="mb-2 ml-[7px] mr-1 mt-[3px] flex-1 rounded-t border border-[#7d98ad] bg-white px-1">
        <div className="flex h-[17px] items-center gap-0.5 text-[13px] leading-4"><Icon name="layers" big={false} />层</div>
        <ul>{layerRows.map(([t, i, o]) => <TreeRow key={t} text={t} icon={i} open={o} muted={i === "layerGray"} />)}</ul>
      </div>
    </section>
  );
}

function MainWindow() {
  return (
    <div className="absolute bottom-[30px] left-0 top-0 flex w-[86.1%] flex-col rounded-t-lg bg-[#0b3fd8] px-1 pb-1">
      <header className="-mx-1 flex h-[30px] shrink-0 items-center rounded-t-lg bg-gradient-to-b from-[#3b93fa] via-[#0454e5] via-30% to-[#0561fb] pl-1.5 pr-1 pt-0.5">
        <Icon name="cube" big={false} />
        <h1 className="ml-1 flex-1 whitespace-pre text-[13px] font-bold leading-5 text-white [text-shadow:1px_1px_1px_#0a2a80]">
          120802 (<span className="text-[14px]">活动的</span>) - Pro/ENGINEER Wildfire 5.0
        </h1>
        <WinButtons />
      </header>
      <nav className="flex h-[26px] shrink-0 items-center gap-[14px] border-b border-[#c7d5de] bg-gradient-to-b from-[#f9fcfe] to-[#eaf1f6] pl-1.5 pt-1.5">
        {menus.map(([l, k]) => <MenuItem key={k} label={l} k={k} />)}
      </nav>
      <div className="flex h-[31px] shrink-0 items-center overflow-hidden bg-gradient-to-b from-[#e6f0f6] to-[#d9e8f1]">
        <Grip />
        <Tools names={["openCheck", "page", "folder", "save", "saveCopy"]} />
        <button className="flex w-[91px] shrink-0 items-center gap-1.5 whitespace-nowrap pl-1 text-[12px] text-[#222]"><Icon name="brush" /><Mixed text="旧版本(O)" small /></button>
        <Grip />
        <Tool name="undo" /><Drop faint /><Tool name="redo" /><Drop faint />
        <Tools names={["cut", "copy", "paste", "pasteSpecial"]} />
        <div className="flex h-[26px] w-[41px] shrink-0 items-center rounded-sm border border-[#8eaabd] border-t-[#60737f] bg-[#c8e2f0]">
          <button aria-label="选取框" className="flex w-7 justify-center border-r border-[#8eaabd]"><Icon name="dashed" /></button><Drop />
        </div>
        <Grip />
        <Tool name="sphere" /><Drop />
        <Tools names={["spin", "camera", "zoom", "refit", "zoomWin", "orient", "saved", "sketchView"]} on={["spin"]} />
        <Grip />
        <Tools names={["blueBall", "wire", "hidden", "noHidden", "shaded", "tree"]} on={["noHidden", "tree"]} />
        <Grip />
        <Tools names={["planeEye", "axisEye", "pointEye", "csysEye", "noteEye"]} on={["noteEye"]} />
      </div>
      <div className="h-[17px] shrink-0 overflow-hidden border-b-2 border-[#e6eff4] bg-[#d9e8f1]">
        <div className="flex h-5 items-start">
          <Grip />
          <LowTools names={["sketchOpen", "dim", "constr", "dots", "vertex"]} on={["dim", "constr", "vertex"]} />
          <Grip />
          <LowTools names={["dashA", "dashB", "dashC", "dashD"]} />
          <Grip />
          <LowTools names={["curve"]} />
          <Grip />
          <LowTools names={["rings", "dim", "arcM", "angle", "diam"]} />
          <Grip />
          <LowTools names={["solid"]} />
          <button className="w-7 shrink-0 pt-0.5 text-[9px] font-bold leading-4">设置</button>
          <LowTools names={["orbit", "nn", "tri", "swap", "flagA"]} />
          <button className="w-7 shrink-0 pt-0.5 text-[10px] leading-4">修面</button>
          <button className="w-7 shrink-0 pt-0.5 text-[10px] leading-4 text-[#86208d]">间</button>
          <LowTools names={["mirrorP", "pHatch"]} />
          <Grip />
          <LowTools names={["grayEye", "grayEye", "darkEye", "grayEye", "grayEye"]} narrow />
          <Grip />
          <LowTools names={["winA", "winX"]} />
        </div>
      </div>
      <Dashboard />
      <div className="flex min-h-0 flex-1 bg-[#dbe6ee]">
        <SideBar />
        <Canvas />
        <div className="flex w-[9px] shrink-0 flex-col items-center bg-[#dce8f0]">
          <span className="mt-[221px] h-1 w-1 shrink-0 rounded-full bg-[#56748a]" />
          <span className="mt-[54px] flex h-[92px] w-2 shrink-0 items-center justify-center rounded-sm border border-[#9eb8ca] bg-[#cfe1ec]"><span className="h-1 w-1 rounded-full bg-[#38536a]" /></span>
        </div>
        <LayerPanel />
      </div>
    </div>
  );
}

function ModelWindow() {
  return (
    <div className="absolute bottom-[30px] right-0 top-[202px] flex w-[202px] flex-col rounded-t-lg bg-[#7287df] px-1 pb-1">
      <header className="flex h-[30px] shrink-0 items-center gap-1 bg-gradient-to-b from-[#7f95e6] via-[#7289de] to-[#86a0ee]">
        <Icon name="cube" big={false} /><h2 className="flex-1 text-[14px] font-bold text-[#dfe6fb]">模型树</h2><WinButtons pale />
      </header>
      <div className="flex min-h-0 flex-1 flex-col bg-[#d6e1ea]">
        <nav className="flex h-[25px] shrink-0 items-center gap-[14px] bg-gradient-to-b from-white to-[#eaf0f5] pl-4 pt-0.5"><MenuItem label="文件" k="F" /><MenuItem label="树" k="T" /></nav>
        <div className="flex h-[29px] shrink-0 items-center"><Tools names={["binoc", "treeFilter", "treeCols", "treeSel", "expand", "collapse"]} on={["treeSel"]} /></div>
        <h3 className="h-[22px] shrink-0 pl-[18px] pt-0.5 text-[12px] font-bold leading-4 text-[#222]">模型树</h3>
        <div className="mb-0.5 mr-0.5 flex-1 rounded-t border border-[#7d98ad] bg-white pl-1">
          <div className="flex h-[17px] items-center gap-1 leading-4"><Icon name="cube" big={false} /><Mixed text="120802.PRT" /></div>
          <ul>{modelRows.map(([t, i, o]) => <TreeRow key={t} text={t} icon={i} open={o} muted={i === "noteGray"} star={t === "拉伸 4"} />)}</ul>
        </div>
      </div>
    </div>
  );
}

const Task = ({ icon, text, active = false }: { icon: string; text: string; active?: boolean }) => (
  <button className={`flex h-[25px] w-[158px] items-center gap-1 rounded-sm pl-2 text-[12px] text-white ${active ? "bg-[#1c4ba8]" : "bg-gradient-to-b from-[#5a97f7] via-[#3c80f2] via-20% to-[#3a78e6]"}`}>
    <Icon name={icon} big={false} /><Mixed text={text} small />
  </button>
);

function TaskBar() {
  return (
    <footer className="absolute inset-x-0 bottom-0 flex h-[30px] items-center bg-gradient-to-b from-[#3f86f0] via-[#245edb] via-15% to-[#1f50c4]">
      <button className="flex h-[30px] w-24 items-center gap-1.5 rounded-r-xl bg-gradient-to-b from-[#5fb35c] via-[#3c8f3a] via-20% to-[#2e7e2d] pl-2.5 text-[19px] italic text-white [text-shadow:1px_1px_1px_#1c4d1b]"><Icon name="windows" />开始</button>
      <div className="ml-[13px] flex w-[90px] items-center gap-[7px]"><Icon name="quick" big={false} /><Icon name="desktopIco" big={false} /><Icon name="browser" big={false} /><span className="-mt-2 pl-1 text-[13px] text-white">»</span></div>
      <div className="flex gap-0.5"><Task icon="browser" text="Pro/E 安装及配置..." /><Task icon="cube" text="120802 (活动的) ..." active /><Task icon="cube" text="模型树" /></div>
      <div className="ml-auto flex items-center self-stretch">
        <span className="mr-5"><Icon name="keyboard" big={false} /></span>
        <div className="flex items-center gap-0.5 self-stretch border-l border-[#1257b8] bg-gradient-to-b from-[#35b0f5] via-[#1492e8] via-20% to-[#128ade] pr-3 text-[11px] text-white">
          <button aria-label="显示隐藏图标" className="-ml-2 flex h-4 w-4 items-center justify-center rounded-full bg-[#4aa5ef]"><svg viewBox="0 0 8 8" className="h-2 w-2"><path d="M6 0L2 4l4 4" fill="none" stroke="#fff" strokeWidth="2" /></svg></button>
          {["quick", "qq", "network", "shield", "monitor"].map((n) => <Icon key={n} name={n} big={false} />)}
          <time className="ml-1">12:02</time>
        </div>
      </div>
    </footer>
  );
}

export default function App() {
  return (
    <div className={`relative h-screen overflow-hidden bg-[linear-gradient(#9b6018_0px,#b66b1b_40px,#c27a2a_78px,#c9ab93_96px,#cbc4c1_118px,#a9a5a3_136px,#7c7c78_152px,#8a8a87_200px)] ${CJK}`}>
      <svg className="absolute right-0 top-0 h-[210px] w-[192px]" fill="none">
        <defs><radialGradient id="glow"><stop stopColor="#67300b" /><stop offset="1" stopColor="#67300b" stopOpacity="0" /></radialGradient></defs>
        <path d="M0 0h122v2H0z" fill="#eee" />
        <ellipse cx="170" cy="10" rx="65" ry="34" fill="url(#glow)" />
        <g className="blur-[1px]" fill="#2c2218">
          <path d="M0 112L15 95 4 123 24 98 11 127 0 148zM0 143L31 118 20 133 1 158zM0 162L29 137 24 150 0 177zM0 178L23 161 12 177 6 181 12 184 0 202z" />
        </g>
      </svg>
      <MainWindow />
      <ModelWindow />
      <TaskBar />
      <svg className="pointer-events-none absolute inset-0 h-full w-full" fill="none" stroke="#b52a3c" strokeWidth="1">
        <path d="M6 112L5 103 17 83 33 75 43 72 97 68 150 67 203 66 213 63 502 63 545 67 590 68 605 70 640 74 668 79 715 83 740 88 762 92 820 94 888 94 897 92H1175L1188 97 1193 105 1185 114 1142 112 1130 108 1105 107H1065L1038 109 1000 116 905 117H775L760 119 745 123 712 124 682 130H310L250 127 245 125H205L175 121 135 118 70 115 10 114zM12 96L22 92" />
      </svg>
      <div className="pointer-events-none absolute bottom-[5px] right-1.5 flex h-[62px] w-[205px] items-start bg-white/25">
        <svg viewBox="0 0 70 62" className="h-[62px] w-[70px] shrink-0" fill="none" strokeLinecap="round">
          <path d="M43 37C36 16 20 3 9 7S3 26 17 34q10 5 22 2" stroke="#7d8db4" strokeWidth="3.500" opacity=".85" />
          <path d="M22 37q-14 5-11 12 7 9 22 2 14-6 14-20" stroke="#7a7fc4" strokeWidth="3" opacity=".8" />
          <path d="M43 22q14-3 14 9 0 12-17 23" stroke="#d2648c" strokeWidth="4" opacity=".85" />
        </svg>
        <strong className="whitespace-nowrap pt-1.5 text-[29px] leading-8 text-[#8bcc9c]">野火论坛</strong>
      </div>
    </div>
  );
}
